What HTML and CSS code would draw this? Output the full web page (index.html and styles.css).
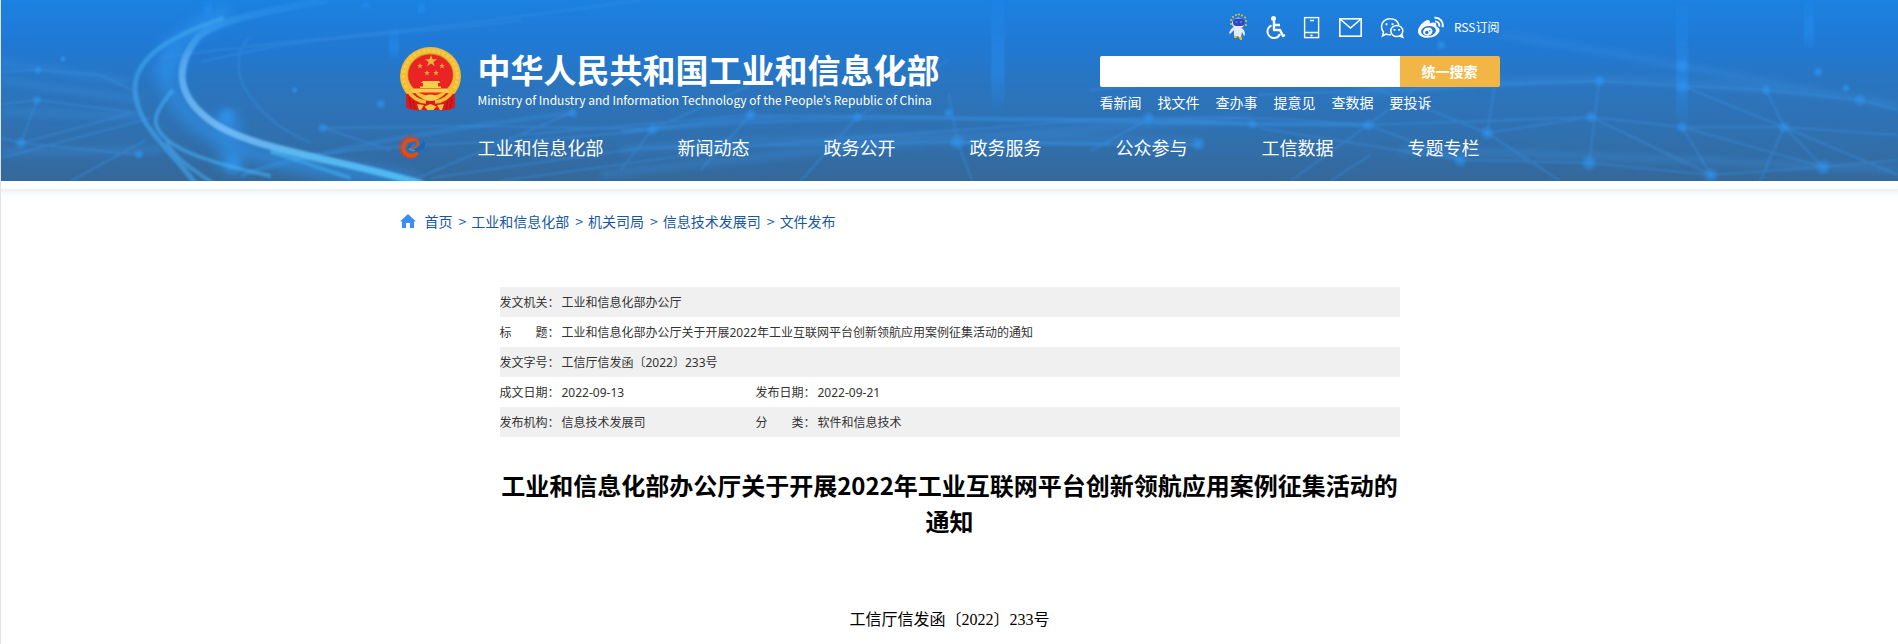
FILE: index.html
```html
<!DOCTYPE html>
<html lang="zh-CN">
<head>
<meta charset="utf-8">
<meta name="viewport" content="width=device-width, initial-scale=1">
<title>工业和信息化部办公厅关于开展2022年工业互联网平台创新领航应用案例征集活动的通知</title>
<link rel="stylesheet" href="styles.css">
</head>
<body>
<header class="site-header">
  <svg class="header-art" viewBox="0 0 1898 181" preserveAspectRatio="none" aria-hidden="true">
    <defs>
      <filter id="soft" x="-20%" y="-20%" width="140%" height="140%"><feGaussianBlur stdDeviation="1.2"/></filter>
      <filter id="glow" x="-30%" y="-30%" width="160%" height="160%"><feGaussianBlur stdDeviation="7"/></filter>
      <filter id="haze" x="-10%" y="-30%" width="120%" height="160%"><feGaussianBlur stdDeviation="3"/></filter>
      <radialGradient id="node"><stop offset="0" stop-color="#2f93ee" stop-opacity=".85"/><stop offset="1" stop-color="#2f93ee" stop-opacity="0"/></radialGradient>
      <linearGradient id="beam" x1="0" y1="0" x2="0" y2="1"><stop offset="0" stop-color="#2590f5" stop-opacity=".1"/><stop offset=".6" stop-color="#2590f5" stop-opacity=".5"/><stop offset="1" stop-color="#2590f5" stop-opacity="0"/></linearGradient>
      <linearGradient id="swoosh" x1="0" y1="0" x2="0" y2="1"><stop offset="0" stop-color="#2a97f0" stop-opacity=".3"/><stop offset=".35" stop-color="#5cb0f5"/><stop offset=".7" stop-color="#7cc0f8"/><stop offset="1" stop-color="#4ac0fa"/></linearGradient>
    </defs>
    <g fill="none" stroke="#2f96f2" filter="url(#glow)" opacity=".65">
      <path stroke-width="14" d="M229 12C180 30 155 60 170 90S210 140 270 158S370 172 416 184"/>
      <path stroke-width="22" d="M175 42L162 82M225 112L232 170"/>
    </g>
    <g fill="none" stroke="#3a93e6" stroke-width="7" filter="url(#haze)" opacity=".3">
      <path d="M0 62L130 82M0 80L140 100M0 112L140 116M0 152L160 150M620 150Q900 128 1200 142M600 175Q900 138 1250 118M1500 35Q1600 50 1682 66T1898 106M1330 100Q1500 70 1700 84T1898 108M1400 150Q1600 155 1898 170"/>
    </g>
    <g fill="none" stroke="#3a93e6" stroke-width="2" filter="url(#soft)" opacity=".4">
      <path d="M0 72L35 70L100 75L135 92M0 104L36 100L130 112M20 143L36 100M0 138L20 143L140 155M20 143L135 112M0 158L150 118M70 181L145 140"/>
      <path d="M160 58C250 42 380 38 640 0M200 62C330 30 420 36 520 20M249 37C234 50 235 75 245 90S270 126 310 143"/>
      <path d="M240 175C340 135 500 150 652 129S860 117 997 119S1230 112 1368 125M322 128L480 126L652 129M322 128L390 150M410 181L570 113M430 178L640 148L957 142L1198 145M620 170L652 129L750 85M700 170L750 115M800 181L857 117L948 60M948 93L957 142L972 181M857 117L750 115L520 135M500 181L760 145L1090 120L1252 124"/>
      <path d="M1090 151L1150 118L1252 124L1368 125L1591 117M1090 90L1250 76L1400 90L1599 81L1682 86L1766 90L1860 100L1898 110M1290 181L1368 125L1420 85L1599 81M1368 125L1460 160M1258 128L1460 160L1589 163L1711 175L1823 167L1898 160M1487 133L1495 82M1487 133L1591 117L1682 127L1784 127L1898 135M1589 163L1599 81M1591 117L1711 175M1682 127L1711 175M1682 127L1823 167M1766 90L1784 127L1823 167M1682 86L1784 127L1898 175M1258 95L1380 90L1487 133L1560 181M1370 155L1330 181M1784 127L1760 181"/>
    </g>
    <g fill="none" stroke="#3492e4" stroke-width="5" filter="url(#soft)" opacity=".3">
      <path d="M620 132Q800 114 1000 119T1368 125M240 176Q340 142 570 113M950 143L1110 144"/>
    </g>
    <g fill="url(#beam)" filter="url(#soft)">
      <path d="M991 0h13v115h-13z"/><path d="M1676 0h12v132h-12z"/><path d="M1804 0h10v52h-10z"/><path d="M388 28h10v32h-10z"/><path d="M203 0h8v20h-8z"/><path d="M361 0h8v10h-8z"/><path d="M417 0h7v16h-7z"/>
    </g>
    <g fill="url(#node)">
      <circle cx="36" cy="100" r="6"/><circle cx="20" cy="143" r="7"/><circle cx="37" cy="70" r="5"/><circle cx="62" cy="59" r="4"/>
      <circle cx="138" cy="154" r="6"/><circle cx="226" cy="116" r="11"/><circle cx="232" cy="165" r="12"/><circle cx="322" cy="128" r="6"/>
      <circle cx="294" cy="90" r="4"/><circle cx="380" cy="104" r="6"/><circle cx="572" cy="113" r="6"/><circle cx="652" cy="129" r="7"/>
      <circle cx="750" cy="115" r="7"/><circle cx="857" cy="117" r="6"/><circle cx="948" cy="113" r="6"/><circle cx="957" cy="142" r="9"/>
      <circle cx="1148" cy="118" r="7"/><circle cx="1252" cy="124" r="6"/><circle cx="1368" cy="125" r="7"/><circle cx="1198" cy="144" r="8"/>
      <circle cx="1487" cy="133" r="8"/><circle cx="1460" cy="160" r="8"/><circle cx="1441" cy="45" r="6"/><circle cx="1599" cy="81" r="7"/>
      <circle cx="1682" cy="86" r="8"/><circle cx="1682" cy="66" r="8"/><circle cx="1766" cy="90" r="6"/><circle cx="1860" cy="100" r="7"/>
      <circle cx="1846" cy="88" r="5"/><circle cx="1818" cy="72" r="6"/><circle cx="1591" cy="117" r="7"/><circle cx="1682" cy="127" r="7"/>
      <circle cx="1784" cy="127" r="7"/><circle cx="1589" cy="163" r="9"/><circle cx="1711" cy="175" r="9"/><circle cx="1823" cy="167" r="9"/>
    </g>
    <g fill="none" filter="url(#soft)">
      <path d="M223 18C170 36 135 56 134 88C134 125 170 150 194 183" stroke="#3fa9f2" stroke-width="5" opacity=".6"/>
      <path d="M172 90C160 104 153 115 155 124C162 148 205 162 270 176" stroke="#45b2f5" stroke-width="4" opacity=".55"/>
      <path d="M165 142C180 165 200 174 212 183M270 152C310 164 330 172 350 178" stroke="#45b2f5" stroke-width="4" opacity=".5"/>
      <path d="M327 0C270 10 215 20 197 37C172 68 178 96 206 118C245 150 330 156 422 184" stroke="url(#swoosh)" stroke-width="7" opacity=".85"/>
      <path d="M270 150C320 162 370 168 424 186" stroke="#4fc0fa" stroke-width="6" opacity=".35"/>
    </g>
  </svg>

  <div class="wrap header-inner">
    <div class="masthead">
      <a class="brand" href="#">
        <svg class="emblem" viewBox="0 0 61 64" role="img" aria-label="国徽">
          <path d="M8 44L6 60Q13 64 22 63H40Q49 64 55 60L53 44z" fill="#d8151a"/>
          <ellipse cx="30.500" cy="29" rx="30.500" ry="29" fill="#f2bd35"/>
          <ellipse cx="30.500" cy="29" rx="27" ry="25.500" fill="none" stroke="#f8cb4c" stroke-width="3" stroke-dasharray="3 2"/>
          <ellipse cx="30.500" cy="27.500" rx="23" ry="21" fill="#c98a1c"/>
          <ellipse cx="30.500" cy="28" rx="22.300" ry="20.500" fill="#ea2424"/>
          <path d="M6 47L15 46Q21 53 30.500 54Q40 53 46 46L55 47V60Q49 64 40 63H21Q12 64 6 60z" fill="#dc191c"/>
          <path d="M7 42Q14 54 26 55M54 42Q47 54 35 55" fill="none" stroke="#f2bd35" stroke-width="3.500"/>
          <path d="M9 50l2 11M13 54l2 8M52 50l-2 11M48 54l-2 8" stroke="#a80f14"/>
          <path d="M31 8l1.500 4.200h4.500l-3.600 2.700 1.400 4.300L31 16.600 27.200 19.200l1.400-4.300L25 12.200h4.500z" fill="#eab43a"/>
          <g fill="#eaa53a"><path id="st" d="M20 16l.8 2h2l-1.600 1.300.6 2.100L20 20.200l-1.800 1.200.6-2.100L17.200 18h2z"/><use href="#st" x="22"/><use href="#st" x="7" y="7"/><use href="#st" x="16" y="7"/></g>
          <path d="M23 34h16l1.500 2H38v3.500h3V41H20v-1.500h3V36h-2zM14 41.500h33V43h1.500v2.500h-36V43H14z" fill="#f6cd4c"/>
          <path d="M23 52q2-4.500 7.500-4.500t7.500 4.500q-3-1-4 1.500h-7q-1-2.500-4-1.500z" fill="#f7cf50"/>
          <path d="M17 57l7 1-3 5h-2zM44 57l-7 1 3 5h2zM30.500 57l6 2.500-3 3.500h-6l-3-3.500z" fill="#f4c63f"/>
        </svg>
        <span class="brand-text">
          <span class="brand-cn">中华人民共和国工业和信息化部</span>
          <span class="brand-en" lang="en">Ministry of Industry and Information Technology of the People’s Republic of China</span>
        </span>
      </a>

      <div class="tools">
        <div class="quick-icons">
          <a href="#" aria-label="智能问答"><svg width="27" height="28" viewBox="0 0 27 28">
            <g fill="#f3c21c"><circle cx="6" cy="11" r="1"/><circle cx="6" cy="7" r="1"/><circle cx="8" cy="4" r="1"/><circle cx="11" cy="2" r="1"/><circle cx="14" cy="1.500" r="1"/><circle cx="17" cy="2.500" r="1"/><circle cx="20" cy="4.500" r="1"/><circle cx="21" cy="8" r="1"/><circle cx="21" cy="12" r="1"/></g>
            <path d="M8 7q5-5 11 0v5q-1 3-3 3 4 1 4 7l-1 1-2-4-1 5-1 2-2-3-3 2-1-3V17l-4 4-1-1q2-5 5-6-2-1-2-4z" fill="#e6ebfa"/>
            <rect x="8" y="5.500" width="11.500" height="7.500" rx="3.500" fill="#3442c4"/><path d="M10.500 9h2M15 9h2" stroke="#58b6ff"/>
            <path d="M9 23h3v2H9zM14 24h3v3h-2z" fill="#f3b01c"/>
          </svg></a>
          <a href="#" aria-label="无障碍"><svg width="27" height="28" viewBox="0 0 27 28" fill="none" stroke="#fff">
            <circle cx="11.500" cy="5.500" r="2.500" fill="#fff" stroke="none"/>
            <path d="M12 8v9h6l3 6 2-1M12 12h6" stroke-width="2.400" stroke-linejoin="round"/>
            <path d="M9.500 12.500A6.500 6.500 0 1 0 18 21" stroke-width="2"/>
          </svg></a>
          <a href="#" aria-label="移动版"><svg width="25" height="28" viewBox="0 0 25 28" fill="none" stroke="#fff" stroke-width="1.400">
            <rect x="5.600" y="4.600" width="14" height="20"/><path d="M5 19.500h15M11 7.500h4"/><path d="M11.500 22.500h2" stroke-width="2"/>
          </svg></a>
          <a href="#" aria-label="邮箱"><svg width="33" height="28" viewBox="0 0 33 28" fill="none" stroke="#fff" stroke-width="1.600">
            <rect x="5.800" y="5.800" width="21.400" height="17.400"/><path d="M6 6l10.500 9L27 6"/>
          </svg></a>
          <a href="#" aria-label="微信"><svg width="30" height="28" viewBox="0 0 30 28" fill="none" stroke="#fff" stroke-width="1.500">
            <path d="M14 21.500q-3 .5-5-.5l-3.500 2 1-4a8 8 0 0 1-2-5.500C4.500 9 8.500 5.700 13 5.700c4.800 0 8 2.800 8.800 6.500"/>
            <ellipse cx="19.800" cy="18" rx="6" ry="5.600"/><path d="M22.500 23l3.300 1.300-1-3"/>
            <path d="M9.500 10.200v2M15.500 10.200v2M17.500 16v1.800M22 16v1.800" stroke-width="1.800"/>
          </svg></a>
          <a href="#" aria-label="微博"><svg width="27" height="28" viewBox="0 0 27 28">
            <path d="M9.500 7.200c2.500-1 4 .5 3.200 3.200 3-1.300 7-1.600 6.600 1.700-.1 1-.3 1.500.8 2 2 .8 2.900 2.300 2.300 4.200-1 3.700-6.400 6.500-11.600 6.500C5.500 24.800 1 22.600 1 18.400 1 14 6 8.500 9.500 7.200z" fill="#fff"/>
            <ellipse cx="11.500" cy="18" rx="7.500" ry="5" transform="rotate(-8 11.500 18)" fill="#2179d2"/>
            <ellipse cx="10.800" cy="18.600" rx="4.800" ry="4" transform="rotate(-18 10.800 18.600)" fill="#fff"/>
            <circle cx="9.800" cy="19.500" r="1.700" fill="#2179d2"/><circle cx="12.700" cy="17.800" r=".8" fill="#2179d2"/>
            <path d="M17.500 4.800a7.500 7.500 0 0 1 8 9.500M18.200 8.400a4 4 0 0 1 4 5" fill="none" stroke="#fff" stroke-width="1.900"/>
          </svg></a>
          <a class="rss" href="#">RSS订阅</a>
        </div>
        <form class="search">
          <input class="search-input" type="text" aria-label="搜索">
          <button class="search-button" type="button">统一搜索</button>
        </form>
        <div class="shortcuts">
          <a href="#">看新闻</a><a href="#">找文件</a><a href="#">查办事</a><a href="#">提意见</a><a href="#">查数据</a><a href="#">要投诉</a>
        </div>
      </div>
    </div>

    <nav class="main-nav">
      <a class="nav-logo" href="#" aria-label="工信微报"><svg width="28" height="24" viewBox="0 0 28 24" fill="none">
        <path d="M20 4.500A10.700 10.700 0 1 0 20 19.500" stroke="#d9401f" stroke-width="2.400" stroke-dasharray="2 2.200"/>
        <path d="M19.500 17.800A8 8 0 1 1 16 5.200" stroke="#ea4a10" stroke-width="4"/>
        <path d="M9.500 14Q20 14 20 8.500C20 4 13 3.500 9 7.500" stroke="#ea4a10" stroke-width="2.200"/>
        <path d="M9 13.500Q10 8.500 15 8.500Q11.500 11 12.500 14Q21 15 25 6Q30 10 24 14.500Q16 19.500 9 13.500z" fill="#1668b8"/>
        <path d="M11 13.500Q13 16 17 15.500" stroke="#2aa3e6" stroke-width="1.500"/>
      </svg></a>
      <a href="#">工业和信息化部</a><a href="#">新闻动态</a><a href="#">政务公开</a><a href="#">政务服务</a><a href="#">公众参与</a><a href="#">工信数据</a><a href="#">专题专栏</a>
    </nav>
  </div>
</header>
<div class="header-shadow"></div>

<main class="wrap">
  <nav class="crumbs" aria-label="当前位置">
    <svg width="16" height="14" viewBox="0 0 16 14" aria-hidden="true"><path d="M8 0l8 7.500h-2V14h-4V9H6v5H2V7.500H0z" fill="#3b8cf5"/></svg>
    <a href="#">首页</a><span>&gt;</span><a href="#">工业和信息化部</a><span>&gt;</span><a href="#">机关司局</a><span>&gt;</span><a href="#">信息技术发展司</a><span>&gt;</span><a href="#">文件发布</a>
  </nav>

  <article class="document">
    <table class="meta">
      <colgroup><col class="col-label"><col class="col-value"><col class="col-label"><col></colgroup>
      <tbody>
        <tr><th scope="row">发文机关：</th><td colspan="3">工业和信息化部办公厅</td></tr>
        <tr><th scope="row">标　　题：</th><td colspan="3">工业和信息化部办公厅关于开展2022年工业互联网平台创新领航应用案例征集活动的通知</td></tr>
        <tr><th scope="row">发文字号：</th><td colspan="3">工信厅信发函〔2022〕233号</td></tr>
        <tr><th scope="row">成文日期：</th><td>2022-09-13</td><th scope="row">发布日期：</th><td>2022-09-21</td></tr>
        <tr><th scope="row">发布机构：</th><td>信息技术发展司</td><th scope="row">分　　类：</th><td>软件和信息技术</td></tr>
      </tbody>
    </table>
    <h1 class="title">工业和信息化部办公厅关于开展2022年工业互联网平台创新领航应用案例征集活动的通知</h1>
    <p class="doc-number">工信厅信发函〔2022〕233号</p>
  </article>
</main>
</body>
</html>
```
FILE: styles.css
```css
* { box-sizing: border-box; }

body {
  margin: 0;
  border-left: 1px solid #dfe3e6;
  min-height: 100vh;
  background: #fff;
  color: #333;
  font-family: "Noto Sans CJK SC", "Noto Sans", sans-serif;
  font-size: 14px;
  line-height: 20px;
}

a { color: inherit; text-decoration: none; }
svg { display: block; }

.wrap {
  width: 100%;
  max-width: 1100px;
  margin: 0 auto;
}

.site-header {
  position: relative;
  background: linear-gradient(180deg, #1c81e1 0%, #2079d3 25%, #2b74bd 50%, #3070af 75%, #34689a 100%);
  color: #fff;
}

.header-art {
  position: absolute;
  inset: 0;
  width: 100%;
  height: 100%;
}

.header-inner {
  position: relative;
  padding: 13px 0 22px;
}

.masthead {
  display: flex;
  justify-content: space-between;
}

.brand {
  display: flex;
  gap: 17px;
  padding-top: 34px;
}

.emblem { width: 61px; height: 64px; }

.brand-text { display: flex; flex-direction: column; white-space: nowrap; }

.brand-cn {
  font-size: 33px;
  font-weight: 700;
  line-height: 44px;
}

.brand-en {
  font-family: "Noto Sans CJK KR", "Noto Sans", sans-serif;
  font-size: 12px;
  line-height: 18px;
}

.tools { width: 400px; }

.quick-icons {
  display: flex;
  justify-content: flex-end;
  align-items: center;
  gap: 10px;
  height: 28px;
}

.rss { font-size: 12px; white-space: nowrap; }

.search {
  display: flex;
  height: 31px;
  margin-top: 15px;
  border-radius: 2px;
  overflow: hidden;
}

.search-input {
  flex: 1;
  min-width: 0;
  border: 0;
  padding: 0 8px;
  background: #fff;
  font: inherit;
}

.search-button {
  width: 100px;
  border: 0;
  padding: 0 0 2px;
  background: #f2b647;
  color: #fff;
  font: inherit;
  font-weight: 700;
}

.shortcuts {
  display: flex;
  gap: 16px;
  padding-top: 5px;
}

.main-nav {
  display: flex;
  justify-content: space-between;
  padding: 23px 20px 0 0;
  font-size: 18px;
  line-height: 24px;
  white-space: nowrap;
}

.nav-logo { width: 4px; }
.nav-logo svg { margin-left: -2px; }

.header-shadow {
  height: 16px;
  background: linear-gradient(180deg, #fff 8px, #e9eff4 8px, #f4f8fb 11px, #fff 16px);
}

.crumbs {
  display: flex;
  align-items: center;
  padding-top: 14px;
  color: #1656a5;
}

.crumbs svg { margin-right: 9px; }
.crumbs span { padding: 0 5px 0 6px; }

.document {
  padding: 56px 100px 0;
}

.meta {
  width: 100%;
  table-layout: fixed;
  border-collapse: collapse;
  font-family: "Noto Sans", "Noto Sans CJK SC", sans-serif;
  font-size: 12px;
  line-height: 28px;
}

.col-label { width: 62px; }
.col-value { width: 194px; }

.meta th, .meta td {
  padding: 2px 0 0;
  font-weight: 400;
  text-align: left;
  white-space: nowrap;
}

.meta tr:nth-child(odd) { background: #f0f0f0; }

.title {
  margin: 30px 0 0;
  color: #000;
  font-size: 24px;
  font-weight: 700;
  line-height: 36px;
  text-align: center;
}

.doc-number {
  margin: 69px 0 0;
  color: #000;
  font-family: "Liberation Serif", "Noto Sans CJK SC", serif;
  font-size: 16px;
  line-height: 24px;
  text-align: center;
}
```
